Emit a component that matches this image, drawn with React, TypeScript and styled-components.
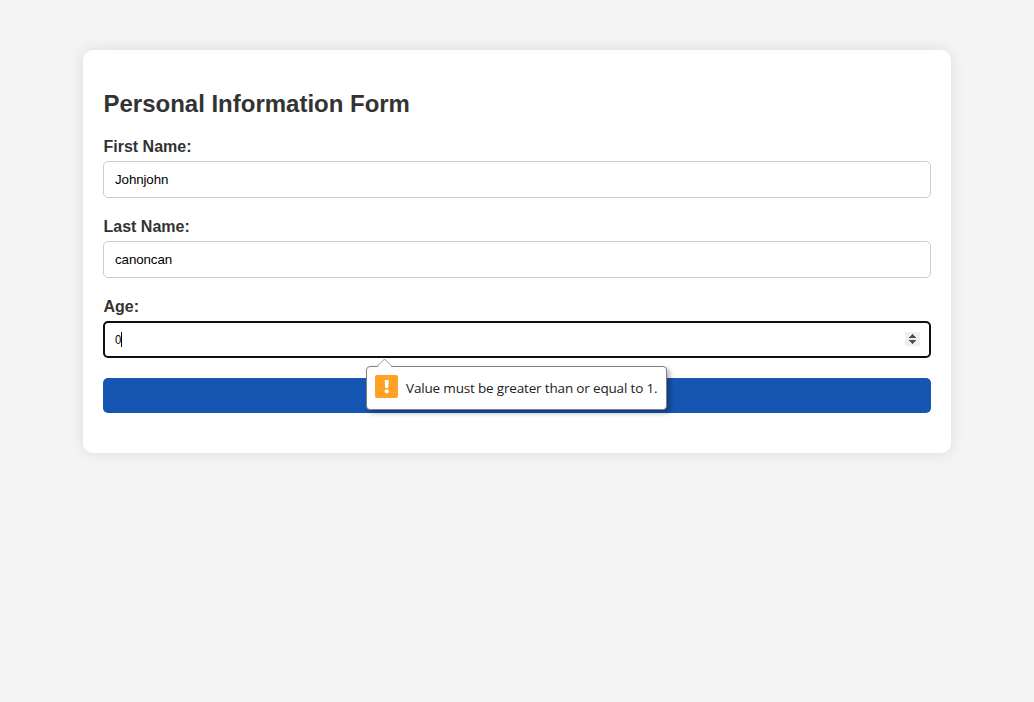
import React from "react";
import styled, { createGlobalStyle } from "styled-components";

const GlobalStyle = createGlobalStyle`
  * { box-sizing: border-box; }
  body {
    margin: 0;
    padding: 50px 83px;
    background: #f4f4f4;
    font-family: "Liberation Sans", Arial, sans-serif;
    color: #333;
  }
`;

const Card = styled.main`
  height: 403px;
  padding: 40px 20px;
  background: #fff;
  border-radius: 10px;
  box-shadow: 0 0 15px rgba(0, 0, 0, 0.1);
`;

const Title = styled.h2`
  margin: 0 0 20px;
  padding-left: 0.5px;
  font-size: 24px;
  line-height: 27px;
  letter-spacing: -0.01px;
`;

const Field = styled.div`
  height: 80px;
`;

const Label = styled.label`
  display: block;
  height: 24px;
  padding: 1px 0 0 0.5px;
  font-size: 16px;
  line-height: 18px;
  font-weight: bold;
`;

const InputBox = styled.div<{ $focused?: boolean }>`
  display: flex;
  align-items: center;
  justify-content: space-between;
  position: relative;
  height: 37px;
  padding: ${(p) => (p.$focused ? "0 9px 0 10px" : "0 11px")};
  border: ${(p) => (p.$focused ? "2px solid #101010" : "1px solid #ccc")};
  border-radius: 5px;
  background: #fff;
`;

const Value = styled.span<{ $narrow?: boolean }>`
  display: inline-block;
  width: ${(p) => (p.$narrow ? "6px" : "auto")};
  font-size: 13.333px;
  line-height: 15px;
  letter-spacing: -0.1px;
  color: #000;
  transform: ${(p) => (p.$narrow ? "scaleX(0.85)" : "none")};
  transform-origin: left center;
`;

const Entry = styled.div`
  display: flex;
  align-items: center;
`;

const Caret = styled.i`
  width: 1px;
  height: 15px;
  background: #000;
`;

const StepperIcon = styled.svg`
  margin-bottom: 1px;
`;

const Submit = styled.button`
  display: block;
  width: 100%;
  height: 35px;
  margin-top: 1px;
  padding: 0;
  border: 0;
  border-radius: 5px;
  background: #1556b3;
`;

const Tooltip = styled.div`
  position: absolute;
  z-index: 1;
  top: 43px;
  left: 261px;
  display: flex;
  align-items: center;
  width: 301px;
  height: 44px;
  padding: 0 8px;
  gap: 8px;
  border: 1px solid #808080;
  border-radius: 4px;
  background: #fff;
  box-shadow: 3px 3px 5px rgba(0, 0, 0, 0.3);
`;

const Pointer = styled.svg`
  position: absolute;
  top: -9px;
  left: 8.5px;
`;

const WarningIcon = styled.svg`
  flex: none;
  margin-bottom: 3px;
`;

const Message = styled.span`
  font-family: "Open Sans", sans-serif;
  font-size: 13.5px;
  line-height: 20px;
  letter-spacing: -0.17px;
  white-space: nowrap;
  color: #222;
`;

function Stepper() {
  return (
    <StepperIcon width="15" height="14" shapeRendering="crispEdges">
      <rect width="15" height="14" fill="#efefef" />
      <path
        fill="#505050"
        d="M7 2h1v1h1v1h1v1h1v1H4V5h1V4h1V3h1zM4 8h7v1h-1v1H9v1H8v1H7v-1H6v-1H5V9H4z"
      />
    </StepperIcon>
  );
}

function ValidationMessage() {
  return (
    <Tooltip role="alert">
      <Pointer width="17" height="10">
        <path d="M1 9.5L8.5 1.5L16 9.5V10H1z" fill="#fff" />
        <path d="M1 8.5L8.5 1L16 8.5" fill="none" stroke="#999" />
      </Pointer>
      <WarningIcon width="23" height="23">
        <rect width="23" height="23" rx="2" fill="#ffa126" />
        <path d="M9.7 5h4l-.5 8h-3z" fill="#fff" />
        <circle cx="11.7" cy="16.3" r="2" fill="#fff" />
      </WarningIcon>
      <Message>Value must be greater than or equal to 1.</Message>
    </Tooltip>
  );
}

export default function App() {
  return (
    <>
      <GlobalStyle />
      <Card>
        <Title>Personal Information Form</Title>
        <Field>
          <Label>First Name:</Label>
          <InputBox><Value>Johnjohn</Value></InputBox>
        </Field>
        <Field>
          <Label>Last Name:</Label>
          <InputBox><Value>canoncan</Value></InputBox>
        </Field>
        <Field>
          <Label>Age:</Label>
          <InputBox $focused>
            <Entry><Value $narrow>0</Value><Caret /></Entry>
            <Stepper />
            <ValidationMessage />
          </InputBox>
        </Field>
        <Submit type="submit" aria-label="Submit" />
      </Card>
    </>
  );
}
